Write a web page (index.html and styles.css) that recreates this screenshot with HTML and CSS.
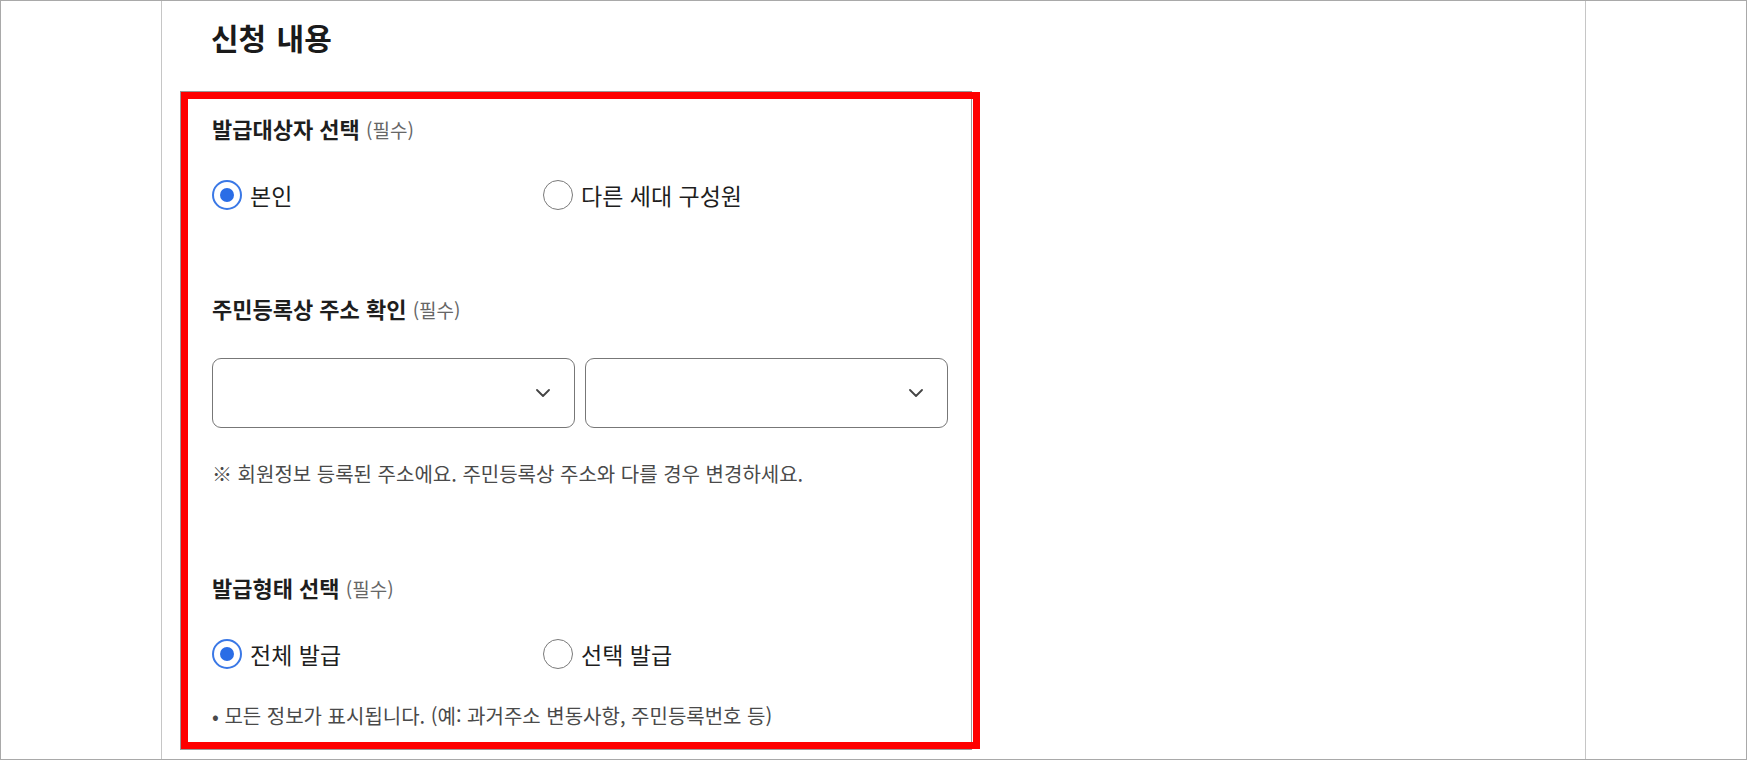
FILE: index.html
```
<!DOCTYPE html>
<html lang="ko">
<head>
<meta charset="utf-8">
<title>신청 내용</title>
<link rel="stylesheet" href="styles.css">
</head>
<body>
<div class="frame">
  <aside class="side"></aside>
  <main class="main">
    <h2 class="title">신청 내용</h2>
    <section class="card">
      <div class="field">
        <p class="label">발급대상자 선택 <span class="req">(필수)</span></p>
        <div class="radios">
          <label class="radio"><span class="circle checked"></span><span class="radio-text">본인</span></label>
          <label class="radio"><span class="circle"></span><span class="radio-text">다른 세대 구성원</span></label>
        </div>
      </div>
      <div class="field field-address">
        <p class="label">주민등록상 주소 확인 <span class="req">(필수)</span></p>
        <div class="selects">
          <div class="select">
            <svg class="chevron" width="14" height="8" viewBox="0 0 14 8"><polyline points="1,1 7,7 13,1" fill="none" stroke="#444" stroke-width="1.8" stroke-linecap="round" stroke-linejoin="round"/></svg>
          </div>
          <div class="select">
            <svg class="chevron" width="14" height="8" viewBox="0 0 14 8"><polyline points="1,1 7,7 13,1" fill="none" stroke="#444" stroke-width="1.8" stroke-linecap="round" stroke-linejoin="round"/></svg>
          </div>
        </div>
        <p class="note">※ 회원정보 등록된 주소에요. 주민등록상 주소와 다를 경우 변경하세요.</p>
      </div>
      <div class="field field-type">
        <p class="label">발급형태 선택 <span class="req">(필수)</span></p>
        <div class="radios">
          <label class="radio"><span class="circle checked"></span><span class="radio-text">전체 발급</span></label>
          <label class="radio"><span class="circle"></span><span class="radio-text">선택 발급</span></label>
        </div>
        <p class="bullet-note">• 모든 정보가 표시됩니다. (예: 과거주소 변동사항, 주민등록번호 등)</p>
      </div>
    </section>
  </main>
  <aside class="side"></aside>
</div>
</body>
</html>
```
FILE: styles.css
```
*, *::before, *::after {
  box-sizing: border-box;
}

html, body {
  margin: 0;
  padding: 0;
  background: #ffffff;
}

body {
  font-family: "Noto Sans CJK KR", "Noto Sans", sans-serif;
  color: #1e1e1e;
}

.frame {
  width: 1747px;
  height: 760px;
  border: 1px solid #a9a9a9;
  display: grid;
  grid-template-columns: 160px 1425px 1fr;
  overflow: hidden;
}

.main {
  border-left: 1px solid #c6c6c6;
  border-right: 1px solid #c6c6c6;
  padding-top: 16px;
}

.title {
  margin: 0 0 34px 49px;
  font-size: 30px;
  line-height: 40px;
  height: 40px;
  font-weight: 700;
  color: #1a1a1a;
  word-spacing: 2px;
}

.card {
  position: relative;
  margin-left: 18px;
  width: 792px;
  height: 659px;
  border: 1px solid #9a9a9a;
  padding: 21px 23px 0 31px;
}

.card::after {
  content: "";
  position: absolute;
  top: 0;
  left: 0;
  width: 799px;
  height: 657px;
  border: 7px solid #ff0000;
  pointer-events: none;
}

.label {
  margin: 0;
  height: 30px;
  font-size: 22px;
  line-height: 30px;
  font-weight: 700;
  color: #1e1e1e;
}

.req {
  font-size: 19px;
  line-height: 1;
  font-weight: 400;
  color: #666666;
}

.radios {
  margin-top: 37px;
  display: grid;
  grid-template-columns: 331px 1fr;
  height: 30px;
}

.radio {
  display: flex;
  align-items: center;
  gap: 8px;
  height: 30px;
}

.circle {
  width: 30px;
  height: 30px;
  flex: none;
  border-radius: 50%;
  border: 1px solid #7a7a7a;
  background: #ffffff;
  display: flex;
  align-items: center;
  justify-content: center;
}

.circle.checked {
  border: 2px solid #3a78e6;
}

.circle.checked::before {
  content: "";
  width: 14px;
  height: 14px;
  border-radius: 50%;
  background: #2a6de6;
}

.radio-text {
  font-size: 23px;
  line-height: 30px;
  color: #1e1e1e;
}

.field-address {
  margin-top: 83px;
}

.selects {
  margin-top: 35px;
  display: flex;
  gap: 10px;
}

.select {
  flex: 1;
  height: 70px;
  border: 1px solid #777777;
  border-radius: 9px;
  display: flex;
  align-items: center;
  justify-content: flex-end;
  padding-right: 24px;
  background: #ffffff;
}

.chevron {
  display: block;
}

.note {
  margin: 32px 0 0;
  height: 28px;
  font-size: 20px;
  line-height: 28px;
  color: #4a4a4a;
}

.field-type {
  margin-top: 84px;
}

.bullet-note {
  margin: 33px 0 0;
  height: 28px;
  font-size: 20px;
  line-height: 28px;
  color: #4a4a4a;
}
```
